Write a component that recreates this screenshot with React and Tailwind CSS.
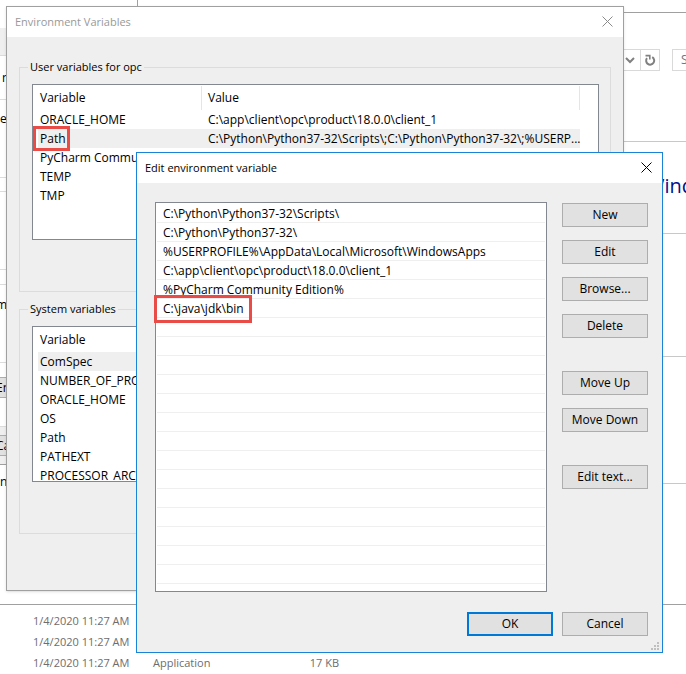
import clsx from 'clsx';

const userVariables = [
  { name: 'ORACLE_HOME', value: 'C:\\app\\client\\opc\\product\\18.0.0\\client_1' },
  { name: 'Path', value: 'C:\\Python\\Python37-32\\Scripts\\;C:\\Python\\Python37-32\\;%USERP...', selected: true, marked: true },
  { name: 'PyCharm Community Edition', value: '' },
  { name: 'TEMP', value: '' },
  { name: 'TMP', value: '' },
];

const systemVariables = [
  { name: 'ComSpec', value: '', selected: true },
  { name: 'NUMBER_OF_PROCESSORS', value: '' },
  { name: 'ORACLE_HOME', value: '' },
  { name: 'OS', value: '' },
  { name: 'Path', value: '' },
  { name: 'PATHEXT', value: '' },
  { name: 'PROCESSOR_ARCHITECTURE', value: '' },
];

const pathEntries = [
  'C:\\Python\\Python37-32\\Scripts\\',
  'C:\\Python\\Python37-32\\',
  '%USERPROFILE%\\AppData\\Local\\Microsoft\\WindowsApps',
  'C:\\app\\client\\opc\\product\\18.0.0\\client_1',
  '%PyCharm Community Edition%',
  'C:\\java\\jdk\\bin',
];

const EMPTY_ROWS = 14;

function CloseIcon() {
  return (
    <svg viewBox="0 0 11 11" className="w-[11px] h-[11px]" fill="none" stroke="currentColor">
      <path d="M0.5 0.5 L10.5 10.5 M10.5 0.5 L0.5 10.5" />
    </svg>
  );
}

function TitleBar({ title, inactive }) {
  return (
    <div className="flex items-center justify-between h-[30px] bg-white pl-2 pr-[10px]">
      <h2 className={clsx('text-[11px]', inactive ? 'text-[#999999]' : 'text-black')}>{title}</h2>
      <button type="button" aria-label="Close" className={clsx('pb-0.5', inactive ? 'text-[#8a8a8a]' : 'text-black')}>
        <CloseIcon />
      </button>
    </div>
  );
}

function DialogButton({ children, primary }) {
  return (
    <button
      type="button"
      className={clsx(
        'w-[86px] h-6 bg-[#e1e1e1] flex items-center justify-center',
        primary ? 'border-2 border-[#0078d7]' : 'border border-[#adadad]'
      )}
    >
      {children}
    </button>
  );
}

function VariableGroup({ title, rows }) {
  return (
    <fieldset className="border border-[#dcdcdc] pl-3 pr-[11px] pt-[9px] pb-[51px]">
      <legend className="-ml-1 px-0.5 text-[11px]">{title}</legend>
      <div className="h-[156px] overflow-hidden bg-white border border-[#828790] pl-[5px] pr-[18px]">
        <table className="w-full table-fixed border-separate border-spacing-0 text-left whitespace-nowrap">
          <thead>
            <tr>
              <th className="w-[164px] h-[25px] p-0 font-normal">
                <div className="h-6 pl-0.5 flex items-center border-r border-[#e5e5e5]">Variable</div>
              </th>
              <th className="h-[25px] p-0 font-normal">
                <div className="h-6 pl-1.5 flex items-center border-r border-[#e5e5e5]">Value</div>
              </th>
            </tr>
          </thead>
          <tbody>
            {rows.map((row) => (
              <tr key={row.name} className={clsx('h-[19px]', row.selected && 'bg-[#efefef]')}>
                <td className="p-0 pl-0.5">
                  <span className="relative">
                    {row.name}
                    {row.marked && (
                      <span className="absolute -left-[7px] -right-1 -inset-y-1 border-[3px] border-[#e94b47]" />
                    )}
                  </span>
                </td>
                <td className="p-0 pl-1.5">{row.value}</td>
              </tr>
            ))}
          </tbody>
        </table>
      </div>
    </fieldset>
  );
}

function EnvironmentVariablesDialog() {
  return (
    <section className="absolute left-[6px] top-[6px] w-[618px] bg-[#efefef] border border-[#a0a0a0] shadow-sm">
      <TitleBar title="Environment Variables" inactive />
      <div className="flex flex-col gap-[9px] px-3 pt-[22px] pb-14">
        <VariableGroup title="User variables for opc" rows={userVariables} />
        <VariableGroup title="System variables" rows={systemVariables} />
      </div>
    </section>
  );
}

function EditVariableDialog() {
  return (
    <section className="absolute left-[136px] top-[152px] w-[527px] bg-[#efefef] border border-[#1883d7]">
      <TitleBar title="Edit environment variable" />
      <div className="pt-[19px] pl-[18px] pr-[14px] pb-4">
        <div className="flex justify-between">
          <ul className="w-[392px] bg-white border border-[#828790] px-px pt-px pb-[7px]">
            {pathEntries.map((entry, i) => (
              <li key={entry} className="h-[19px] pl-1.5 pt-0.5 border-b border-[#efefef] whitespace-nowrap">
                <span className="relative block w-fit">
                  {entry}
                  {i === pathEntries.length - 1 && (
                    <span className="absolute -left-[9px] -right-2 -inset-y-1.5 border-[3px] border-[#e94b47]" />
                  )}
                </span>
              </li>
            ))}
            {Array.from({ length: EMPTY_ROWS }, (_, i) => (
              <li key={i} className="h-[19px] border-b border-[#efefef]" />
            ))}
          </ul>
          <div className="flex flex-col gap-[33px] pt-px">
            <div className="flex flex-col gap-[13px]">
              <DialogButton>New</DialogButton>
              <DialogButton>Edit</DialogButton>
              <DialogButton>Browse...</DialogButton>
              <DialogButton>Delete</DialogButton>
            </div>
            <div className="flex flex-col gap-[13px]">
              <DialogButton>Move Up</DialogButton>
              <DialogButton>Move Down</DialogButton>
            </div>
            <DialogButton>Edit text...</DialogButton>
          </div>
        </div>
        <div className="flex justify-end gap-[9px] pt-5">
          <DialogButton primary>OK</DialogButton>
          <DialogButton>Cancel</DialogButton>
        </div>
      </div>
      <svg viewBox="0 0 8 8" className="absolute right-[3px] bottom-0.5 w-2 h-2" fill="#bfbfbf">
        <path d="M6 0h2v2h-2z M3 3h2v2h-2z M6 3h2v2h-2z M0 6h2v2h-2z M3 6h2v2h-2z M6 6h2v2h-2z" />
      </svg>
    </section>
  );
}

// System Properties, of which only a thin strip shows at the left
function PropertiesStrip() {
  return (
    <div className="w-[137px] pt-7">
      <div className="h-7 bg-[#efefef] border-b border-[#dcdcdc]" />
      <div className="h-11 pl-0.5 flex items-center border-b border-[#dcdcdc]">n</div>
      <div className="h-[78px] pt-[11px] border-b border-[#dcdcdc]">e</div>
      <div className="h-[14px] border-b border-[#dcdcdc]" />
      <div className="h-[78px] border-b border-[#dcdcdc]" />
      <div className="h-[15px] border-b border-[#dcdcdc]" />
      <div className="h-[78px] pt-3 border-b border-[#dcdcdc]"><span className="-ml-1">m</span></div>
      <div className="h-16 pt-[14px] border-b border-[#dcdcdc]">
        <button type="button" className="h-[21px] w-20 -ml-1 bg-[#e1e1e1] border-y border-[#adadad] text-left flex items-center">En</button>
      </div>
      <div className="h-[38px] pt-2 bg-[#efefef] border-b border-[#a0a0a0]">
        <button type="button" className="h-[21px] w-20 -ml-1 bg-[#e1e1e1] border-y border-[#adadad] text-left flex items-center">Ca</button>
      </div>
      <div className="pt-[9px]">n</div>
    </div>
  );
}

// Control panel window behind the dialogs
function SystemWindow() {
  return (
    <div className="flex-1 min-w-0 pt-3 border-l border-[#a0a0a0]">
      <div className="h-[130px] pt-9 border-y border-t-[#a0a0a0] border-b-[#c8c8c8]">
        <div className="flex h-[22px]">
          <div className="w-[503px] shrink-0 border border-[#d9d9d9] flex items-center justify-end pr-[5px]">
            <svg viewBox="0 0 10 7" className="w-[10px] h-[7px]" fill="none" stroke="#808080" strokeWidth="2">
              <path d="M1 1 L5 5 L9 1" />
            </svg>
          </div>
          <button type="button" aria-label="Refresh" className="w-[19px] shrink-0 border border-l-0 border-[#d9d9d9] flex items-center justify-center">
            <svg viewBox="0 0 12 12" className="w-3 h-3" fill="none" stroke="#808080" strokeWidth="2">
              <path d="M8.2 3.2 A4 4 0 1 1 3 4.2" />
              <path d="M1.5 1.6 H5.8 V5.4" strokeWidth="1.6" />
            </svg>
          </button>
          <input
            aria-label="Search"
            placeholder="Search"
            className="ml-3 w-40 shrink-0 border border-[#d9d9d9] pl-2 placeholder:text-[#757575]"
          />
        </div>
      </div>
      <div className="h-[92px] pl-[508px] pt-8 border-b border-[#c8c8c8] text-[20px] leading-6 text-[#00108c] whitespace-nowrap">
        Windows
      </div>
      <div className="h-[123px] border-b border-[#c8c8c8]" />
      <div className="h-[127px] border-b border-[#c8c8c8]" />
    </div>
  );
}

function FileList() {
  return (
    <table className="mt-[5px] ml-[33px] text-[11px] text-[#6d6d6d] whitespace-nowrap">
      <tbody>
        {[1, 2, 3].map((n) => (
          <tr key={n} className="h-[21px]">
            <td className="w-[120px] p-0">1/4/2020 11:27 AM</td>
            <td className="w-[100px] p-0">Application</td>
            <td className="w-[86px] p-0 text-right">17 KB</td>
          </tr>
        ))}
      </tbody>
    </table>
  );
}

export default function App() {
  return (
    <main className="relative min-h-screen overflow-hidden bg-white text-black text-[12px] leading-4 font-['Open_Sans','Noto_Sans',sans-serif]">
      <div className="flex h-[605px] overflow-hidden border-b border-[#a0a0a0]">
        <PropertiesStrip />
        <SystemWindow />
      </div>
      <FileList />
      <EnvironmentVariablesDialog />
      <EditVariableDialog />
    </main>
  );
}
